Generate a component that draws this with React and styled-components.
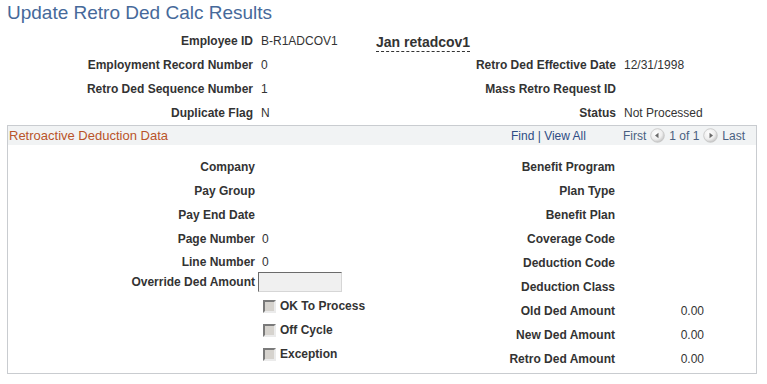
import React from 'react';
import styled, { createGlobalStyle } from 'styled-components';

const GlobalStyle = createGlobalStyle`
  body {
    margin: 0;
    font-family: "Liberation Sans", Arial, sans-serif;
    font-size: 12px;
    color: #333;
    background: #fff;
  }
`;

const Page = styled.div`
  width: 767px;
  height: 384px;
  overflow: hidden;
`;

const Title = styled.h1`
  margin: 0;
  padding-left: 7px;
  height: 29px;
  line-height: 26px;
  font-size: 19px;
  font-weight: normal;
  color: #46699a;
`;

const HeaderGrid = styled.div`
  display: grid;
  grid-template-columns: 253px 123px 240px 1fr;
  grid-auto-rows: 24px;
  align-items: center;
`;

const Label = styled.div`
  font-weight: bold;
  text-align: right;
  white-space: nowrap;
`;

const Value = styled.div`
  padding-left: ${p => p.$pad || 8}px;
  white-space: nowrap;
`;

const Name = styled.span`
  display: inline-block;
  font-size: 14px;
  font-weight: bold;
  color: #333;
  padding-bottom: 1px;
  border-bottom: 1px dashed #333;
  margin-top: 3px;
`;

const GroupBox = styled.section`
  margin-left: 7px;
  width: 750px;
  height: 249px;
  box-sizing: border-box;
  border: 1px solid #c9ccd0;
`;

const GroupBar = styled.div`
  display: flex;
  align-items: center;
  height: 19px;
  background: #f1f3f4;
  padding: 0 11px 0 1px;
`;

const GroupTitle = styled.div`
  flex: 1;
  color: #b9542a;
  font-size: 13px;
`;

const NavLink = styled.span`
  color: ${p => (p.$muted ? '#4a5f80' : '#2f4c84')};
  font-size: 12px;
  margin-left: ${p => p.$gap || 0}px;
  display: flex;
  align-items: center;
`;

const Columns = styled.div`
  display: grid;
  grid-template-columns: 372px 1fr;
  padding-top: 10px;
`;

const Column = styled.div`
  display: flex;
  flex-direction: column;
`;

const Row = styled.div`
  display: grid;
  grid-template-columns: ${p => p.$label}px ${p => p.$value || 'auto'};
  align-items: center;
  height: ${p => p.$h || 24}px;
  margin-top: ${p => p.$mt || 0}px;
`;

const Amount = styled.div`
  text-align: right;
  width: 89px;
`;

const AmountInput = styled.input`
  margin: 0 0 0 3px;
  width: 84px;
  height: 20px;
  box-sizing: border-box;
  background: #f0f0f0;
  border: 1px solid;
  border-color: #6b6b6b #d6d6d6 #d6d6d6 #6b6b6b;
  padding: 0;
`;

const CheckLine = styled.label`
  display: flex;
  align-items: center;
  gap: 4px;
  padding-left: 8px;
  font-weight: bold;
  white-space: nowrap;
`;

const Box = styled.span`
  width: 13px;
  height: 13px;
  box-sizing: border-box;
  background: #d6d3ce;
  border: 2px solid;
  border-color: #7a7a7a #ebebeb #ebebeb #7a7a7a;
`;

const Arrow = ({ dir }) => (
  <svg width="15" height="15" viewBox="0 0 15 15" style={{ margin: '0 4px' }}>
    <defs>
      <radialGradient id={`g${dir}`} cx="40%" cy="35%" r="70%">
        <stop offset="0" stopColor="#ffffff" />
        <stop offset="0.6" stopColor="#eeeeee" />
        <stop offset="1" stopColor="#bdbdbd" />
      </radialGradient>
    </defs>
    <circle cx="7.5" cy="7.5" r="6.8" fill={`url(#g${dir})`} stroke="#c4c4c4" strokeWidth="0.8" />
    {dir === 'left' ? (
      <path d="M5 7.5 L8.5 4.8 L8.5 10.2 Z" fill="#6a6a6a" />
    ) : (
      <path d="M10 7.5 L6.5 4.8 L6.5 10.2 Z" fill="#6a6a6a" />
    )}
  </svg>
);

const header = [
  ['Employee ID', 'B-R1ADCOV1', null, null],
  ['Employment Record Number', '0', 'Retro Ded Effective Date', '12/31/1998'],
  ['Retro Ded Sequence Number', '1', 'Mass Retro Request ID', ''],
  ['Duplicate Flag', 'N', 'Status', 'Not Processed'],
];

const leftRows = [
  ['Company', ''],
  ['Pay Group', ''],
  ['Pay End Date', ''],
  ['Page Number', '0'],
];

const rightRows = [
  ['Benefit Program', null],
  ['Plan Type', null],
  ['Benefit Plan', null],
  ['Coverage Code', null],
  ['Deduction Code', null],
  ['Deduction Class', null],
  ['Old Ded Amount', '0.00'],
  ['New Ded Amount', '0.00'],
  ['Retro Ded Amount', '0.00'],
];

const checks = ['OK To Process', 'Off Cycle', 'Exception'];

export default function App() {
  return (
    <Page>
      <GlobalStyle />
      <Title>Update Retro Ded Calc Results</Title>
      <HeaderGrid>
        {header.map(([l1, v1, l2, v2], i) => (
          <React.Fragment key={l1}>
            <Label>{l1}</Label>
            <Value>{v1}</Value>
            {i === 0 ? (
              <div><Name>Jan retadcov1</Name></div>
            ) : (
              <Label>{l2}</Label>
            )}
            <Value>{v2}</Value>
          </React.Fragment>
        ))}
      </HeaderGrid>

      <GroupBox>
        <GroupBar>
          <GroupTitle>Retroactive Deduction Data</GroupTitle>
          <NavLink>Find | View All</NavLink>
          <NavLink $muted $gap={37}>First</NavLink>
          <Arrow dir="left" />
          <NavLink $muted>1 of 1</NavLink>
          <Arrow dir="right" />
          <NavLink $muted>Last</NavLink>
        </GroupBar>

        <Columns>
          <Column>
            {leftRows.map(([l, v]) => (
              <Row key={l} $label={247}>
                <Label>{l}</Label>
                <Value $pad={7}>{v}</Value>
              </Row>
            ))}
            <Row $label={247} $h={21}>
              <Label>Line Number</Label>
              <Value $pad={7}>0</Value>
            </Row>
            <Row $label={247} $h={20}>
              <Label>Override Ded Amount</Label>
              <AmountInput type="text" readOnly />
            </Row>
            {checks.map((c, i) => (
              <Row key={c} $label={247} $mt={i === 0 ? 2 : 0}>
                <span />
                <CheckLine>
                  <Box />
                  {c}
                </CheckLine>
              </Row>
            ))}
          </Column>
          <Column>
            {rightRows.map(([l, v]) => (
              <Row key={l} $label={235}>
                <Label>{l}</Label>
                {v ? <Amount>{v}</Amount> : <span />}
              </Row>
            ))}
          </Column>
        </Columns>
      </GroupBox>
    </Page>
  );
}
